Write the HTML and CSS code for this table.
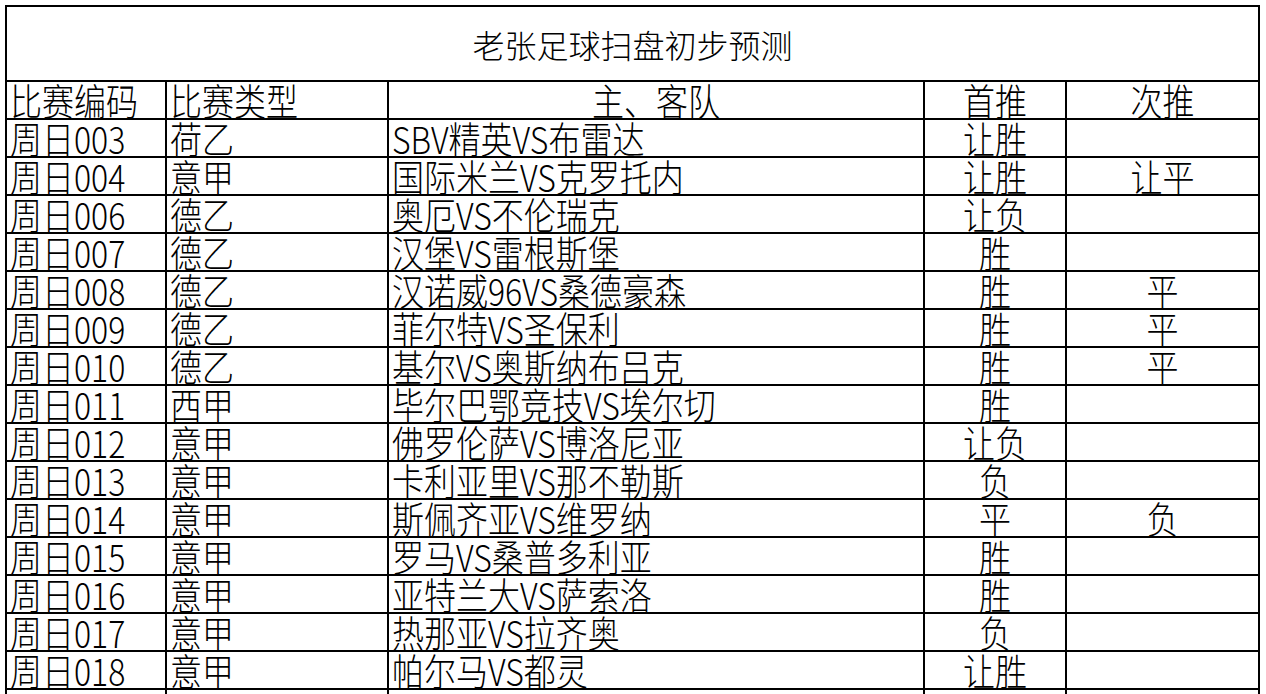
FILE: index.html
```html
<!DOCTYPE html>
<html lang="zh-CN">
<head>
<meta charset="utf-8">
<title>老张足球扫盘初步预测</title>
<link rel="stylesheet" href="styles.css">
</head>
<body>
<div class="sheet">
  <div class="cell title"><span>老张足球扫盘初步预测</span></div>

  <div class="cell"><span>比赛编码</span></div>
  <div class="cell"><span>比赛类型</span></div>
  <div class="cell center"><span>主、客队</span></div>
  <div class="cell center"><span>首推</span></div>
  <div class="cell center"><span>次推</span></div>

  <div class="cell"><span>周日003</span></div><div class="cell"><span>荷乙</span></div><div class="cell"><span>SBV精英VS布雷达</span></div><div class="cell center"><span>让胜</span></div><div class="cell center"><span></span></div>
  <div class="cell"><span>周日004</span></div><div class="cell"><span>意甲</span></div><div class="cell"><span>国际米兰VS克罗托内</span></div><div class="cell center"><span>让胜</span></div><div class="cell center"><span>让平</span></div>
  <div class="cell"><span>周日006</span></div><div class="cell"><span>德乙</span></div><div class="cell"><span>奥厄VS不伦瑞克</span></div><div class="cell center"><span>让负</span></div><div class="cell center"><span></span></div>
  <div class="cell"><span>周日007</span></div><div class="cell"><span>德乙</span></div><div class="cell"><span>汉堡VS雷根斯堡</span></div><div class="cell center"><span>胜</span></div><div class="cell center"><span></span></div>
  <div class="cell"><span>周日008</span></div><div class="cell"><span>德乙</span></div><div class="cell"><span>汉诺威96VS桑德豪森</span></div><div class="cell center"><span>胜</span></div><div class="cell center"><span>平</span></div>
  <div class="cell"><span>周日009</span></div><div class="cell"><span>德乙</span></div><div class="cell"><span>菲尔特VS圣保利</span></div><div class="cell center"><span>胜</span></div><div class="cell center"><span>平</span></div>
  <div class="cell"><span>周日010</span></div><div class="cell"><span>德乙</span></div><div class="cell"><span>基尔VS奥斯纳布吕克</span></div><div class="cell center"><span>胜</span></div><div class="cell center"><span>平</span></div>
  <div class="cell"><span>周日011</span></div><div class="cell"><span>西甲</span></div><div class="cell"><span>毕尔巴鄂竞技VS埃尔切</span></div><div class="cell center"><span>胜</span></div><div class="cell center"><span></span></div>
  <div class="cell"><span>周日012</span></div><div class="cell"><span>意甲</span></div><div class="cell"><span>佛罗伦萨VS博洛尼亚</span></div><div class="cell center"><span>让负</span></div><div class="cell center"><span></span></div>
  <div class="cell"><span>周日013</span></div><div class="cell"><span>意甲</span></div><div class="cell"><span>卡利亚里VS那不勒斯</span></div><div class="cell center"><span>负</span></div><div class="cell center"><span></span></div>
  <div class="cell"><span>周日014</span></div><div class="cell"><span>意甲</span></div><div class="cell"><span>斯佩齐亚VS维罗纳</span></div><div class="cell center"><span>平</span></div><div class="cell center"><span>负</span></div>
  <div class="cell"><span>周日015</span></div><div class="cell"><span>意甲</span></div><div class="cell"><span>罗马VS桑普多利亚</span></div><div class="cell center"><span>胜</span></div><div class="cell center"><span></span></div>
  <div class="cell"><span>周日016</span></div><div class="cell"><span>意甲</span></div><div class="cell"><span>亚特兰大VS萨索洛</span></div><div class="cell center"><span>胜</span></div><div class="cell center"><span></span></div>
  <div class="cell"><span>周日017</span></div><div class="cell"><span>意甲</span></div><div class="cell"><span>热那亚VS拉齐奥</span></div><div class="cell center"><span>负</span></div><div class="cell center"><span></span></div>
  <div class="cell"><span>周日018</span></div><div class="cell"><span>意甲</span></div><div class="cell"><span>帕尔马VS都灵</span></div><div class="cell center"><span>让胜</span></div><div class="cell center"><span></span></div>
  <div class="cell"><span></span></div><div class="cell"><span></span></div><div class="cell"><span></span></div><div class="cell center"><span></span></div><div class="cell center"><span></span></div>
</div>
</body>
</html>
```

FILE: styles.css
```css
html, body {
  margin: 0;
  padding: 0;
  background: #ffffff;
}

body {
  overflow: hidden;
  height: 694px;
}

.sheet {
  display: grid;
  grid-template-columns: 158px 220px 534px 140px 191px;
  grid-auto-rows: 36px;
  grid-template-rows: 73px;
  gap: 2px;
  padding: 2px;
  margin: 5px 0 0 5px;
  width: max-content;
  background: #000000;
  font-family: "Noto Sans CJK SC", "Noto Sans", sans-serif;
  font-weight: 300;
  color: #000000;
}

.cell {
  background: #ffffff;
  overflow: hidden;
  font-size: 32px;
  line-height: 36px;
  padding-left: 3px;
  white-space: nowrap;
}

.cell span {
  display: inline-block;
  transform: scaleY(1.16);
  transform-origin: 50% 55%;
}

.center {
  text-align: center;
  padding-left: 0;
}

.title {
  grid-column: 1 / -1;
  text-align: center;
  padding-left: 0;
  padding-top: 19px;
  line-height: 36px;
}

.title span {
  transform: none;
}
```
